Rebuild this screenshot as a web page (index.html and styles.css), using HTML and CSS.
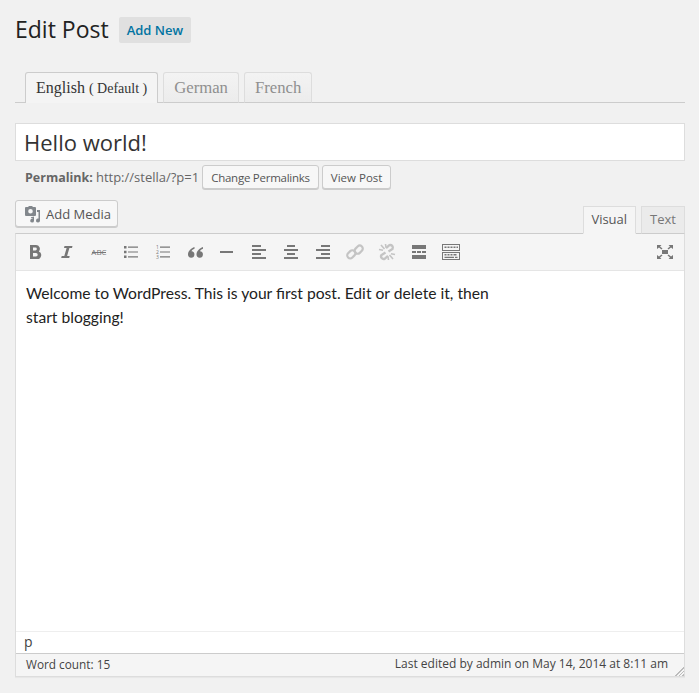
FILE: index.html
```html
<!doctype html>
<html>
<head>
<meta charset="utf-8">
<title>Edit Post</title>
<link rel="stylesheet" href="styles.css">
</head>
<body>
<div id="wrap">
	<div class="heading">
		<h2>Edit Post</h2>
		<a class="addNew">Add New</a>
	</div>
	<div class="langTabs">
		<span class="langTab activeLang">English <small>( Default )</small></span>
		<span class="langTab">German</span>
		<span class="langTab">French</span>
	</div>
	<div class="titleBox">Hello world!</div>
	<div class="permalink">
		<b>Permalink:</b>
		<span class="permaUrl">http://stella/?p=1</span>
		<a class="btn narrow">Change Permalinks</a>
		<a class="btn">View Post</a>
	</div>
	<div class="editorTools">
		<a class="btn mediaBtn">
			<svg width="18" height="18" viewBox="0 0 18 18"><path fill="#82878c" d="M3 2h2l1-1h3l1 1h2a1 1 0 0 1 1 1v7a1 1 0 0 1-1 1H3a1 1 0 0 1-1-1V3a1 1 0 0 1 1-1zm4.500 2a2.300 2.300 0 1 0 0 4.600 2.300 2.300 0 0 0 0-4.600zM14 5h3v10.500a2 2 0 1 1-1.500-1.900V7H14zM8 12.200l3-.7v4.200a1.900 1.900 0 1 1-1.500-1.900v-.8l-1.500.3z"/></svg>
			Add Media
		</a>
		<div class="modeTabs">
			<span class="modeTab activeMode">Visual</span>
			<span class="modeTab">Text</span>
		</div>
	</div>
	<div class="editor">
		<div class="toolbar">
			<span class="ico"><svg width="20" height="20" viewBox="0 0 20 20"><path fill="#777" d="M5 3h6a3.800 3.800 0 0 1 2.800 6.400A4 4 0 0 1 11.500 17H5zm3 2.600v2.900h2.400a1.450 1.450 0 0 0 0-2.900zm0 5.400v3.400h3a1.700 1.700 0 0 0 0-3.400z"/></svg></span>
			<span class="ico"><svg width="20" height="20" viewBox="0 0 20 20"><path fill="#777" d="M7.500 4h8l-.5 2h-2.600l-2.300 8H12.700l-.5 2h-8l.5-2h2.600l2.300-8H7z"/></svg></span>
			<span class="ico"><svg width="20" height="20" viewBox="0 0 20 20"><text x="10" y="13" text-anchor="middle" class="abc">ABC</text><path fill="#777" d="M3 10h14v1H3z"/></svg></span>
			<span class="ico"><svg width="20" height="20" viewBox="0 0 20 20"><path fill="#777" d="M3 4h2.500v2.500H3zM3 8.800h2.500v2.500H3zM3 13.500h2.500V16H3zM7 4.500h10v1.200H7zM7 9.400h10v1.200H7zM7 14.200h10v1.200H7z"/></svg></span>
			<span class="ico"><svg width="20" height="20" viewBox="0 0 20 20"><text x="3" y="7" class="num">1</text><text x="3" y="12" class="num">2</text><text x="3" y="17" class="num">3</text><path fill="#777" d="M7 4.500h10v1.200H7zM7 9.400h10v1.200H7zM7 14.200h10v1.200H7z"/></svg></span>
			<span class="ico"><svg width="20" height="20" viewBox="0 0 20 20"><path fill="#777" d="M9.500 5C6 6.500 3 9 3 12.500a3.200 3.200 0 1 0 3.500-3.200c.3-1 1.500-2 3-2.500zM18 5c-3.500 1.500-6.500 4-6.500 7.500a3.200 3.200 0 1 0 3.500-3.200c.3-1 1.500-2 3-2.500z"/></svg></span>
			<span class="ico"><svg width="20" height="20" viewBox="0 0 20 20"><path fill="#777" d="M3 9h13v2H3z"/></svg></span>
			<span class="ico"><svg width="20" height="20" viewBox="0 0 20 20"><path fill="#777" d="M3 4h9v2H3zM3 8h14v2H3zM3 12h9v2H3zM3 16h14v2H3z" transform="translate(0 -1)"/></svg></span>
			<span class="ico"><svg width="20" height="20" viewBox="0 0 20 20"><path fill="#777" d="M6 4h8v2H6zM3 8h14v2H3zM6 12h8v2H6zM3 16h14v2H3z" transform="translate(0 -1)"/></svg></span>
			<span class="ico"><svg width="20" height="20" viewBox="0 0 20 20"><path fill="#777" d="M8 4h9v2H8zM3 8h14v2H3zM8 12h9v2H8zM3 16h14v2H3z" transform="translate(0 -1)"/></svg></span>
			<span class="ico"><svg width="20" height="20" viewBox="0 0 20 20"><g fill="none" stroke="#c4c4c4" stroke-width="2.200"><rect x="1.800" y="9.300" width="9" height="6" rx="3" transform="rotate(-45 6.300 12.300)"/><rect x="9.200" y="4.700" width="9" height="6" rx="3" transform="rotate(-45 13.700 7.700)"/></g></svg></span>
			<span class="ico"><svg width="20" height="20" viewBox="0 0 20 20"><g fill="none" stroke="#c4c4c4"><path stroke-width="2.400" d="M8.500 10.500L4.500 13a2.600 2.600 0 0 0 3.200 3.800l3.300-3"/><path stroke-width="2.400" d="M11.500 9.500l4-2.500a2.600 2.600 0 0 0-3.200-3.800L9 6.200"/><path stroke-width="1.600" d="M4 3l3.500 4M2 7.500l4 .8M8.500 2l.5 3.500M16 17l-3.500-4M18 12.500l-4-.8M11.500 18l-.5-3.500"/></g></svg></span>
			<span class="ico"><svg width="20" height="20" viewBox="0 0 20 20"><path fill="#777" d="M3 3h14v4H3zM3 9h4v2H3zM8 9h4v2H8zM13 9h4v2h-4zM3 13h14v4H3z"/></svg></span>
			<span class="ico"><svg width="20" height="20" viewBox="0 0 20 20"><path fill="#777" fill-rule="evenodd" d="M1 2h18v7H1zm1 1v5h16V3zM1 10h18v8H1zm1 1v6h16v-6zM3.500 4.500h2V6h-2zm3 0h2V6h-2zm3 0h2V6h-2zm3 0h2V6h-2zm3 0h1.500V6h-1.500zM3.500 12h2v1.500h-2zm3 0h2v1.500h-2zm3 0h2v1.500h-2zm3 0h3v1.500h-3zM3.500 14.800H13v1.300H3.500zm10.500 0h2.500v1.300H14z"/></svg></span>
			<span class="ico fullscreen"><svg width="20" height="20" viewBox="0 0 20 20"><path fill="#777" d="M7 8h6v4H7zM2 3h4.500L5 4.500 7.500 6.500 6.500 7.500 4 5.500 2 7zM18 3h-4.500L15 4.500 12.500 6.500 13.500 7.500 16 5.500 18 7zM2 17h4.500L5 15.500 7.500 13.500 6.500 12.500 4 14.500 2 13zM18 17h-4.500L15 15.500 12.500 13.500 13.500 12.500 16 14.500 18 13z"/></svg></span>
		</div>
		<div class="content">Welcome to WordPress. This is your first post. Edit or delete it, then start blogging!</div>
		<div class="pathRow">p</div>
		<div class="statusRow">
			<span class="wordCount">Word count: 15</span>
			<span>Last edited by admin on May 14, 2014 at 8:11 am</span>
			<i class="grip"></i>
		</div>
	</div>
</div>
</body>
</html>
```

FILE: styles.css
```css
body{
	margin:0;
	background:#f1f1f1;
	color:#444;
	font-family:"Open Sans","Noto Sans",sans-serif;
	font-size:13px;
}
#wrap{
	width:670px;
	height:693px;
	margin-left:15px;
	overflow:hidden;
}
.heading{
	display:flex;
	align-items:center;
	height:26px;
	padding-top:17px;
}
.heading h2{
	margin:-2px 0 0;
	font-size:23px;
	font-weight:400;
	color:#222;
}
.addNew{
	margin-left:10px;
	padding:0 8px;
	height:26px;
	line-height:26px;
	border-radius:2px;
	background:#e0e0e0;
	color:#0074a2;
	font-size:13px;
	font-weight:600;
}
.langTabs{
	display:flex;
	gap:5px;
	margin-top:29px;
	height:30px;
	padding-left:10px;
	border-bottom:1px solid #ccc;
}
.langTab{
	padding:0 10px;
	height:29px;
	line-height:29px;
	border:1px solid #ddd;
	border-bottom:1px solid #ccc;
	border-radius:3px 3px 0 0;
	background:linear-gradient(#f3f3f3,#ececec);
	color:#8f8f8f;
	font-family:"Liberation Serif",serif;
	font-size:16.700px;
}
.activeLang{
	height:30px;
	border-color:#ccc;
	border-bottom:0;
	background:#f4f4f4;
	color:#333;
	font-size:16px;
}
.activeLang small{
	font-size:14px;
}
.titleBox{
	margin-top:20px;
	height:36px;
	line-height:36px;
	padding-left:8px;
	border:1px solid #ddd;
	background:#fff;
	color:#333;
	font-size:22px;
}
.permalink{
	display:flex;
	align-items:center;
	margin-top:4px;
	padding-left:10px;
	height:24px;
	color:#666;
	font-size:13px;
}
.permalink b{
	font-size:12.500px;
	font-weight:700;
	color:#666;
}
.permaUrl{
	margin-left:3px;
	margin-right:3px;
}
.btn{
	display:flex;
	align-items:center;
	box-sizing:border-box;
	height:24px;
	padding:0 8px;
	margin-right:3px;
	border:1px solid #ccc;
	border-radius:3px;
	background:#f7f7f7;
	box-shadow:0 1px 0 #ccc;
	color:#555;
	font-size:11.500px;
}
.narrow{
	letter-spacing:-0.25px;
}
.editorTools{
	display:flex;
	justify-content:space-between;
	align-items:flex-end;
	margin-top:11px;
	height:33px;
}
.mediaBtn{
	align-self:flex-start;
	gap:5px;
	height:27px;
	padding:0 6px 0 7px;
	margin:0;
	font-size:13px;
}
.modeTabs{
	display:flex;
	gap:5px;
	height:28px;
	margin-bottom:-1px;
	position:relative;
}
.modeTab{
	box-sizing:border-box;
	height:28px;
	padding:0 8px;
	line-height:25px;
	border:1px solid #ddd;
	border-bottom:1px solid #ccc;
	background:#ebebeb;
	color:#777;
	font-size:13px;
}
.activeMode{
	padding:0 8px 0 7px;
	border-color:#ddd;
	border-bottom-color:#f5f5f5;
	background:#f5f5f5;
	color:#555;
}
.editor{
	border:1px solid #ddd;
	border-top-color:#ccc;
	background:#f5f5f5;
	box-shadow:0 1px 1px rgba(0,0,0,0.04);
}
.toolbar{
	display:flex;
	align-items:center;
	gap:12px;
	height:36px;
	padding:0 9px;
	border-bottom:1px solid #e5e5e5;
}
.ico{
	display:flex;
}
.fullscreen{
	margin-left:auto;
}
.abc{
	font-family:"Open Sans",sans-serif;
	font-size:8px;
	fill:#777;
}
.num{
	font-family:"Open Sans",sans-serif;
	font-size:5px;
	fill:#777;
}
.content{
	box-sizing:border-box;
	height:360px;
	padding:10px 10px;
	width:500px;
	max-width:100%;
	font-family:Lato,sans-serif;
	font-size:15.650px;
	line-height:24px;
	color:#222;
	background:#fff;
	box-shadow:168px 0 0 #fff;
}
.pathRow{
	height:21px;
	line-height:20px;
	padding-left:8px;
	border-top:1px solid #eee;
	border-bottom:1px solid #ccc;
	background:#fff;
	font-size:14px;
	color:#444;
}
.statusRow{
	display:flex;
	justify-content:space-between;
	position:relative;
	height:22px;
	line-height:20px;
	padding:0 16px 0 10px;
	font-size:12px;
	color:#444;
}
.wordCount{
	font-size:11.800px;
}
.grip{
	position:absolute;
	right:0;
	bottom:0;
	width:11px;
	height:11px;
	background:repeating-linear-gradient(135deg,transparent 0,transparent 1.500px,#bbb 1.500px,#bbb 2.500px);
	clip-path:polygon(100% 0,100% 100%,0 100%);
}
```
